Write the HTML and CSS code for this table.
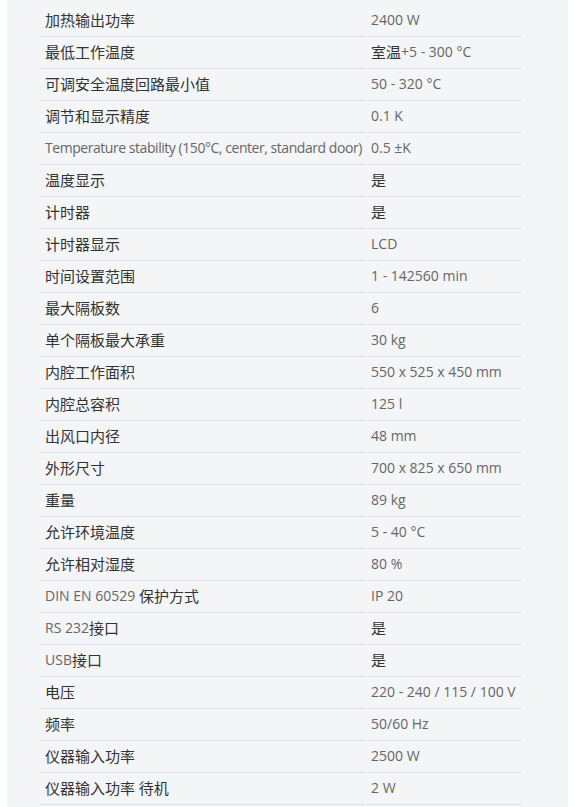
FILE: index.html
```html
<!DOCTYPE html>
<html lang="zh-CN">
<head>
<meta charset="utf-8">
<title>技术参数</title>
<link rel="stylesheet" href="styles.css">
</head>
<body>
<div class="panel">
  <div class="specs">
    <div class="k">加热输出功率</div><div class="v">2400 W</div>
    <div class="k">最低工作温度</div><div class="v"><span class="zh">室温</span>+5 - 300 °C</div>
    <div class="k">可调安全温度回路最小值</div><div class="v">50 - 320 °C</div>
    <div class="k">调节和显示精度</div><div class="v">0.1 K</div>
    <div class="k"><span class="en narrow">Temperature stability (150°C, center, standard door)</span></div><div class="v">0.5 ±K</div>
    <div class="k">温度显示</div><div class="v"><span class="zh">是</span></div>
    <div class="k">计时器</div><div class="v"><span class="zh">是</span></div>
    <div class="k">计时器显示</div><div class="v">LCD</div>
    <div class="k">时间设置范围</div><div class="v">1 - 142560 min</div>
    <div class="k">最大隔板数</div><div class="v">6</div>
    <div class="k">单个隔板最大承重</div><div class="v">30 kg</div>
    <div class="k">内腔工作面积</div><div class="v">550 x 525 x 450 mm</div>
    <div class="k">内腔总容积</div><div class="v">125 l</div>
    <div class="k">出风口内径</div><div class="v">48 mm</div>
    <div class="k">外形尺寸</div><div class="v">700 x 825 x 650 mm</div>
    <div class="k">重量</div><div class="v">89 kg</div>
    <div class="k">允许环境温度</div><div class="v">5 - 40 °C</div>
    <div class="k">允许相对湿度</div><div class="v">80 %</div>
    <div class="k"><span class="en">DIN EN 60529 </span>保护方式</div><div class="v">IP 20</div>
    <div class="k"><span class="en">RS 232</span>接口</div><div class="v"><span class="zh">是</span></div>
    <div class="k"><span class="en">USB</span>接口</div><div class="v"><span class="zh">是</span></div>
    <div class="k">电压</div><div class="v">220 - 240 / 115 / 100 V</div>
    <div class="k">频率</div><div class="v">50/60 Hz</div>
    <div class="k">仪器输入功率</div><div class="v">2500 W</div>
    <div class="k">仪器输入功率<span class="en"> </span>待机</div><div class="v">2 W</div>
  </div>
</div>
</body>
</html>
```
FILE: styles.css
```css
html, body {
  margin: 0;
  padding: 0;
  background: #ffffff;
}
body {
  font-family: "Open Sans", "Noto Sans CJK SC", sans-serif;
  font-size: 14px;
}
.panel {
  margin: 0 9px 0 7px;
  background: #f4f5f7;
  padding: 5px 0 3px 33px;
  min-height: 799px;
}
.specs {
  display: grid;
  grid-template-columns: 324px 155px;
  column-gap: 2px;
}
.k, .v {
  height: 31px;
  border-bottom: 1px solid #dadee5;
  padding-left: 5px;
  display: flex;
  align-items: center;
  white-space: nowrap;
  box-sizing: content-box;
  margin-top: -1px;
  padding-bottom: 1px;
}
.k {
  color: #333333;
  font-size: 15px;
}
.v {
  color: #666666;
  font-size: 14px;
}
.en {
  color: #666666;
  font-size: 14px;
  white-space: pre;
}
.narrow {
  letter-spacing: -0.45px;
}
.zh {
  color: #333333;
  font-size: 15px;
}
```
